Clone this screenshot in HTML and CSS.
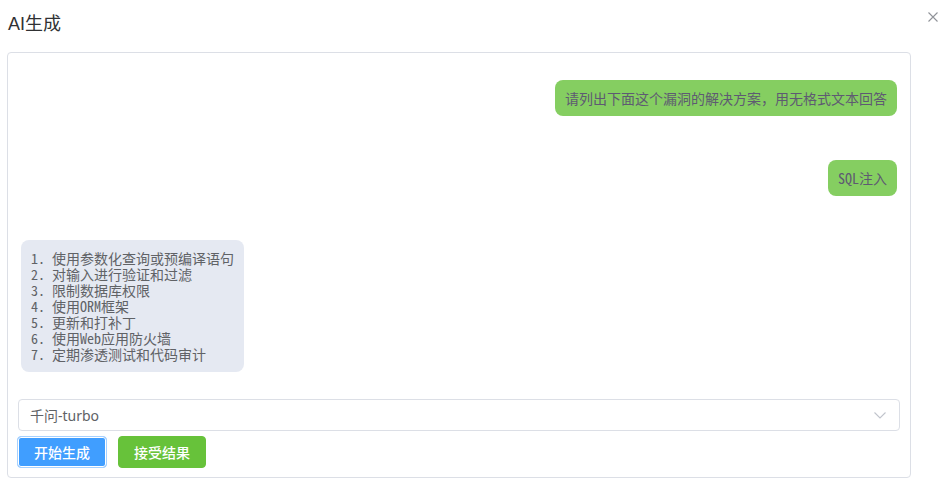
FILE: index.html
```html
<!DOCTYPE html>
<html lang="zh-CN">
<head>
<meta charset="utf-8">
<title>AI生成</title>
<link rel="stylesheet" href="styles.css">
</head>
<body>
<div class="dialog">
  <header class="dialog-header">
    <span class="dialog-title">AI生成</span>
    <button class="dialog-close" aria-label="关闭">
      <svg width="10" height="10" viewBox="0 0 10 10"><path d="M0.5 0.5 L9.5 9.5 M9.5 0.5 L0.5 9.5" stroke="#909399" stroke-width="1.1" fill="none"/></svg>
    </button>
  </header>
  <div class="panel">
    <div class="chat">
      <div class="msg msg-user"><div class="bubble bubble-user">请列出下面这个漏洞的解决方案，用无格式文本回答</div></div>
      <div class="msg msg-user"><div class="bubble bubble-user">SQL注入</div></div>
      <div class="msg msg-ai"><div class="bubble bubble-ai">1. 使用参数化查询或预编译语句
2. 对输入进行验证和过滤
3. 限制数据库权限
4. 使用ORM框架
5. 更新和打补丁
6. 使用Web应用防火墙
7. 定期渗透测试和代码审计</div></div>
    </div>
    <div class="select">
      <span class="select-value">千问-turbo</span>
      <svg class="select-arrow" width="12" height="7" viewBox="0 0 12 7"><path d="M0.5 0.5 L6 6 L11.5 0.5" stroke="#c0c4cc" stroke-width="1.1" fill="none"/></svg>
    </div>
    <div class="actions">
      <button class="btn btn-primary">开始生成</button>
      <button class="btn btn-success">接受结果</button>
    </div>
  </div>
</div>
</body>
</html>
```

FILE: styles.css
```css
* { box-sizing: border-box; }
html, body { margin: 0; padding: 0; background: #fff; }
body {
  font-family: "Liberation Sans", Arial, "Noto Sans CJK SC", sans-serif;
  color: #606266;
  width: 949px;
  height: 491px;
  overflow: hidden;
}
.dialog { padding: 0 38px 0 7px; }
.dialog-header {
  height: 52px;
  display: flex;
  align-items: flex-start;
  justify-content: space-between;
  padding-top: 12px;
  padding-left: 1px;
}
.dialog-title {
  font-size: 18px;
  line-height: 24px;
  color: #303133;
}
.dialog-close {
  margin: 0 -27px 0 0;
  padding: 0;
  border: 0;
  background: none;
  width: 10px;
  height: 10px;
  display: block;
  line-height: 0;
}
.panel {
  border: 1px solid #dcdfe6;
  border-radius: 4px;
  padding: 10px 10px 9px 10px;
  width: 904px;
}
.chat {
  height: 336px;
  padding: 17px 3px 0 3px;
  display: flex;
  flex-direction: column;
  gap: 44px;
  font-family: "Noto Sans Mono CJK SC", "Liberation Mono", "Noto Sans CJK SC", monospace;
  font-size: 14px;
  line-height: 16px;
}
.msg { display: flex; }
.msg-user { justify-content: flex-end; }
.msg-ai { justify-content: flex-start; }
.bubble {
  border-radius: 8px;
  padding: 10px 10px;
  color: #606266;
}
.bubble-user { background: #85ce61; color: #5e5a72; }
.bubble-ai { background: #e5e9f2; white-space: pre; }
.select {
  height: 32px;
  border: 1px solid #dcdfe6;
  border-radius: 4px;
  display: flex;
  align-items: center;
  justify-content: space-between;
  padding: 0 13px 0 11px;
  width: 882px;
}
.select-value {
  font-family: "Noto Sans", "Noto Sans CJK SC", sans-serif;
  font-size: 14px;
  color: #606266;
}
.actions {
  display: flex;
  gap: 11px;
  margin-top: 5px;
  margin-left: -1px;
}
.btn {
  height: 32px;
  border-radius: 4px;
  font-family: "Noto Sans CJK SC", sans-serif;
  font-size: 14px;
  font-weight: 500;
  color: #fff;
  padding: 0;
  line-height: 1;
}
.btn-primary {
  width: 90px;
  background: #409eff;
  border: 1px solid #a6d1ff;
  box-shadow: inset 0 0 0 1px #fff;
}
.btn-success {
  width: 88px;
  background: #67c23a;
  border: 1px solid #67c23a;
}
```
